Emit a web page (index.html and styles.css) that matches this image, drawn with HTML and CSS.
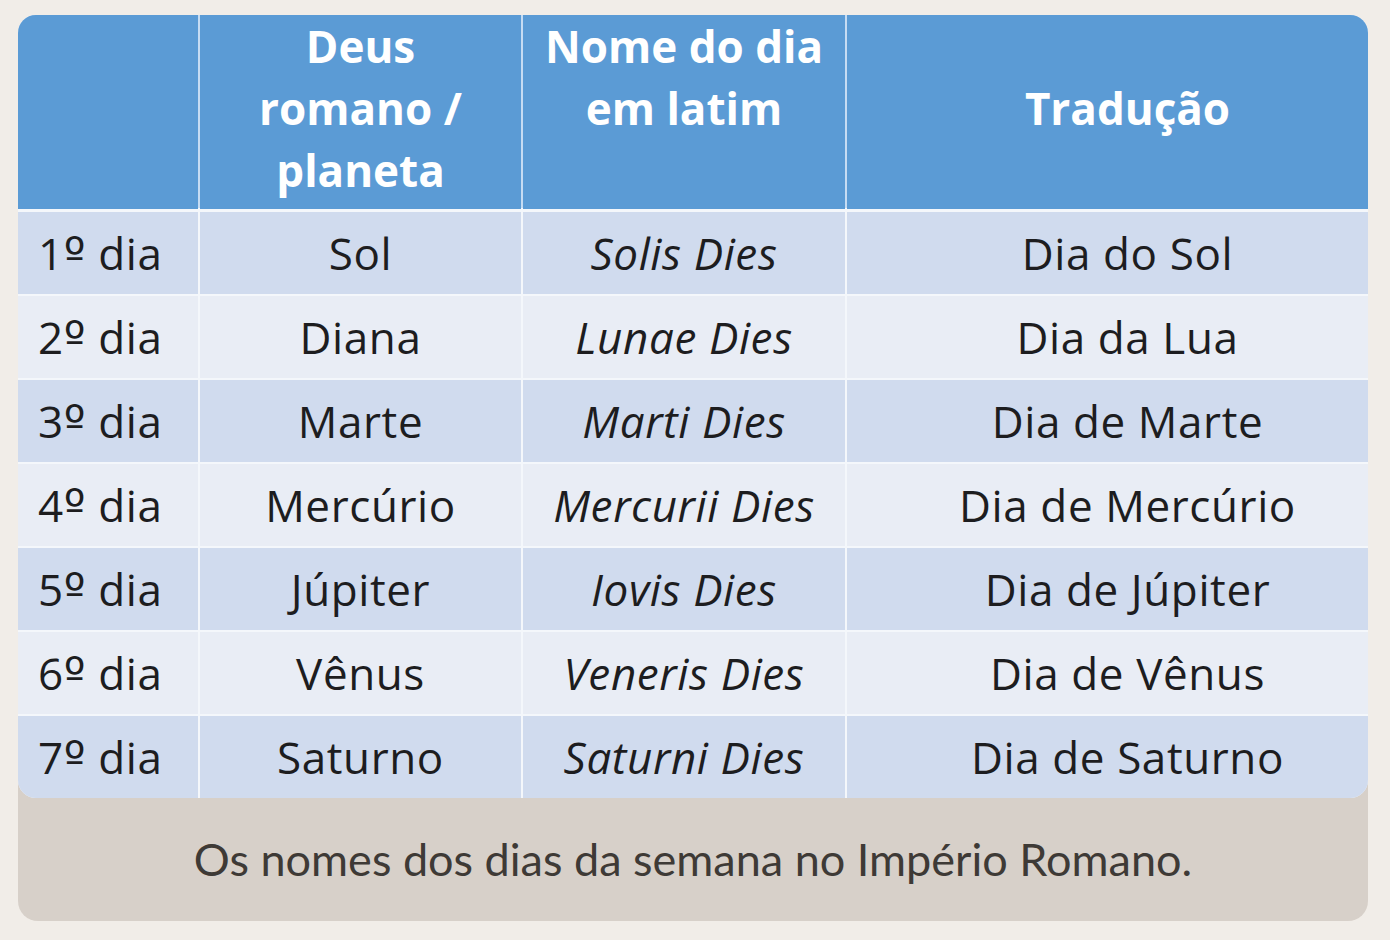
FILE: index.html
```html
<!DOCTYPE html>
<html lang="pt">
<head>
<meta charset="utf-8">
<link rel="stylesheet" href="styles.css">
</head>
<body>
<figure class="card">
  <div class="table">
    <div class="row head">
      <div class="cell"></div>
      <div class="cell"><span>Deus<br>romano /<br>planeta</span></div>
      <div class="cell"><span>Nome do dia<br>em latim<br>&nbsp;</span></div>
      <div class="cell last"><span>Tradução</span></div>
    </div>
    <div class="row odd">
      <div class="cell first"><span>1<span class="ord">º</span> dia</span></div><div class="cell"><span>Sol</span></div><div class="cell it"><span>Solis Dies</span></div><div class="cell last"><span>Dia do Sol</span></div>
    </div>
    <div class="row even">
      <div class="cell first"><span>2<span class="ord">º</span> dia</span></div><div class="cell"><span>Diana</span></div><div class="cell it"><span>Lunae Dies</span></div><div class="cell last"><span>Dia da Lua</span></div>
    </div>
    <div class="row odd">
      <div class="cell first"><span>3<span class="ord">º</span> dia</span></div><div class="cell"><span>Marte</span></div><div class="cell it"><span>Marti Dies</span></div><div class="cell last"><span>Dia de Marte</span></div>
    </div>
    <div class="row even">
      <div class="cell first"><span>4<span class="ord">º</span> dia</span></div><div class="cell"><span>Mercúrio</span></div><div class="cell it"><span>Mercurii Dies</span></div><div class="cell last"><span>Dia de Mercúrio</span></div>
    </div>
    <div class="row odd">
      <div class="cell first"><span>5<span class="ord">º</span> dia</span></div><div class="cell"><span>Júpiter</span></div><div class="cell it"><span>Iovis Dies</span></div><div class="cell last"><span>Dia de Júpiter</span></div>
    </div>
    <div class="row even">
      <div class="cell first"><span>6<span class="ord">º</span> dia</span></div><div class="cell"><span>Vênus</span></div><div class="cell it"><span>Veneris Dies</span></div><div class="cell last"><span>Dia de Vênus</span></div>
    </div>
    <div class="row odd">
      <div class="cell first"><span>7<span class="ord">º</span> dia</span></div><div class="cell"><span>Saturno</span></div><div class="cell it"><span>Saturni Dies</span></div><div class="cell last"><span>Dia de Saturno</span></div>
    </div>
  </div>
  <figcaption class="caption">Os nomes dos dias da semana no Império Romano.</figcaption>
</figure>
</body>
</html>
```

FILE: styles.css
```css
* { box-sizing: border-box; }
html, body { margin: 0; padding: 0; }
body {
  background: #f1ede8;
  padding: 15px 0 0 18px;
  font-family: "Lato", "Noto Sans", sans-serif;
}
.card {
  margin: 0;
  width: 1350px;
  height: 906px;
  background: #d7d0c9;
  border-radius: 20px;
  display: flex;
  flex-direction: column;
}
.table {
  border-radius: 18px;
  overflow: hidden;
  display: flex;
  flex-direction: column;
  gap: 2px;
  background: #f4f7fb;
}
.row {
  display: grid;
  grid-template-columns: 180px 321px 322px 521px;
  column-gap: 2px;
  height: 82px;
}
.row.head {
  height: 193px;
  margin-bottom: 2px;
  background: #c6dcf3;
}
.cell {
  display: flex;
  align-items: center;
  justify-content: center;
  text-align: center;
  font-family: "Open Sans", "Noto Sans", sans-serif;
  font-size: 44px;
  color: #1d1d1f;
  letter-spacing: 0.6px;
}
.head .cell {
  background: #5b9bd5;
  color: #ffffff;
  font-weight: 700;
  line-height: 62px;
  padding-bottom: 8px;
  letter-spacing: 0;
}
.odd .cell { background: #d0dbee; }
.even .cell { background: #e9edf5; }
.cell.first { justify-content: flex-start; padding-left: 20px; }
.cell.last { padding-left: 40px; }
.cell.it { font-style: italic; }
.ord { font-family: "DejaVu Sans", sans-serif; font-size: 1.05em; line-height: 1; }
.caption {
  flex: 1;
  display: flex;
  align-items: center;
  justify-content: center;
  font-size: 45px;
  color: #3e3a36;
  padding-bottom: 2px;
}
```
